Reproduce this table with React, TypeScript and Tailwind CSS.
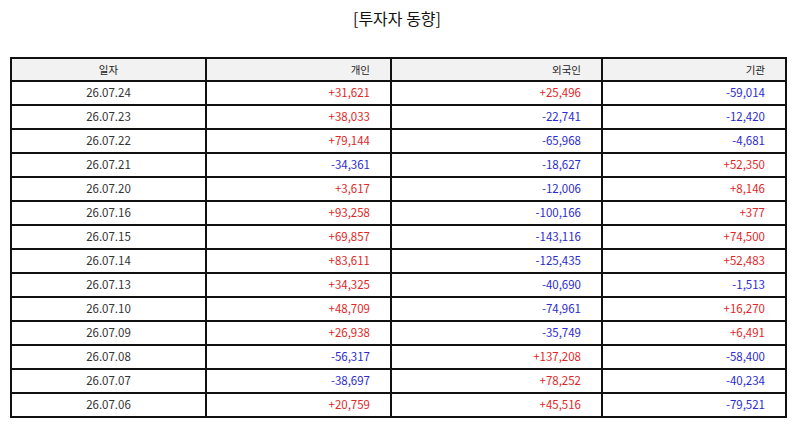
const rows: Array<[string, string, string, string]> = [
    ['26.07.24', '+31,621', '+25,496', '-59,014'],
    ['26.07.23', '+38,033', '-22,741', '-12,420'],
    ['26.07.22', '+79,144', '-65,968', '-4,681'],
    ['26.07.21', '-34,361', '-18,627', '+52,350'],
    ['26.07.20', '+3,617', '-12,006', '+8,146'],
    ['26.07.16', '+93,258', '-100,166', '+377'],
    ['26.07.15', '+69,857', '-143,116', '+74,500'],
    ['26.07.14', '+83,611', '-125,435', '+52,483'],
    ['26.07.13', '+34,325', '-40,690', '-1,513'],
    ['26.07.10', '+48,709', '-74,961', '+16,270'],
    ['26.07.09', '+26,938', '-35,749', '+6,491'],
    ['26.07.08', '-56,317', '+137,208', '-58,400'],
    ['26.07.07', '-38,697', '+78,252', '-40,234'],
    ['26.07.06', '+20,759', '+45,516', '-79,521'],
];

function Num({ value }: { value: string }) {
    const color = value.startsWith('-') ? 'text-[#2b2bd0]' : 'text-[#e32626]';
    return <td className={`border-2 border-[#111] pr-[20px] text-right ${color}`}>{value}</td>;
}

export default function App() {
    return (
        <div className="h-[425px] w-[794px] bg-white font-['Noto_Sans_CJK_KR','Noto_Sans',sans-serif]">
            <div className="pt-[5px] text-center text-[16px] leading-[26px] text-[#111]">[투자자 동향]</div>
            <div className="px-[10px] pt-[26px]">
                <table className="w-[775px] table-fixed border-collapse text-[11.5px] text-[#333]">
                    <colgroup>
                        <col className="w-[195px]" />
                        <col className="w-[185px]" />
                        <col className="w-[211px]" />
                        <col className="w-[184px]" />
                    </colgroup>
                    <thead>
                        <tr className="h-[23px] bg-[#f2f2f2] text-[10.5px] text-[#222]">
                            <th className="border-2 border-[#111] text-center font-normal">일자</th>
                            <th className="border-2 border-[#111] pr-[20px] text-right font-normal">개인</th>
                            <th className="border-2 border-[#111] pr-[20px] text-right font-normal">외국인</th>
                            <th className="border-2 border-[#111] pr-[20px] text-right font-normal">기관</th>
                        </tr>
                    </thead>
                    <tbody>
                        {rows.map((row) => (
                            <tr key={row[0]} className="h-[24px]">
                                <td className="border-2 border-[#111] text-center">{row[0]}</td>
                                <Num value={row[1]} />
                                <Num value={row[2]} />
                                <Num value={row[3]} />
                            </tr>
                        ))}
                    </tbody>
                </table>
            </div>
        </div>
    );
}
